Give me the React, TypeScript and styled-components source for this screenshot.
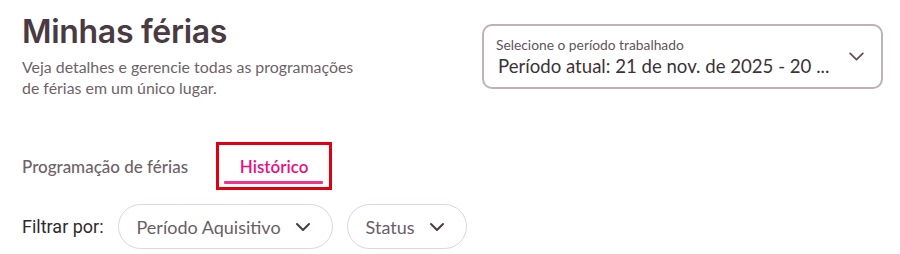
import React from "react";
import styled, { createGlobalStyle } from "styled-components";

const Global = createGlobalStyle`
  html, body { margin: 0; padding: 0; background: #fff; }
  body { font-family: Lato, "Noto Sans", sans-serif; }
`;

const Page = styled.div`
  width: 900px;
  height: 254px;
  box-sizing: border-box;
  padding: 0 17px 0 22px;
  overflow: hidden;
`;

const Header = styled.header`
  display: flex;
  justify-content: space-between;
  align-items: flex-start;
`;

const TitleBlock = styled.div`
  padding-top: 12px;
`;

const Title = styled.h1`
  margin: 0;
  font-family: Inter, "Noto Sans", sans-serif;
  font-weight: 600;
  font-size: 32px;
  line-height: 40px;
  letter-spacing: -0.3px;
  color: #4a3a44;
`;

const Subtitle = styled.p`
  margin: 4px 0 0;
  width: 345px;
  font-family: Lato, sans-serif;
  font-size: 15.9px;
  line-height: 21px;
  color: #6e6269;
`;

const SelectBox = styled.div`
  margin-top: 24px;
  width: 401px;
  height: 65px;
  box-sizing: border-box;
  border: 2px solid #bfb0ba;
  border-radius: 10px;
  display: flex;
  align-items: center;
  padding: 0 16px 0 12px;
`;

const SelectText = styled.div`
  flex: 1;
  min-width: 0;
`;

const SelectLabel = styled.div`
  font-family: Lato, sans-serif;
  font-size: 13.8px;
  line-height: 16px;
  color: #5f545b;
`;

const SelectValue = styled.div`
  margin-top: 2px;
  padding-left: 2px;
  font-family: Lato, sans-serif;
  font-size: 18.6px;
  line-height: 22px;
  color: #3c3238;
  white-space: nowrap;
`;

const Tabs = styled.nav`
  display: flex;
  align-items: stretch;
  margin-top: 44px;
  height: 48px;
`;

const Tab = styled.div<{ $active?: boolean }>`
  position: relative;
  display: flex;
  align-items: center;
  box-sizing: border-box;
  padding: ${(p) => (p.$active ? "0" : "0 28px 0 0")};
  font-family: Lato, sans-serif;
  font-size: 17px;
  font-weight: ${(p) => (p.$active ? 600 : 500)};
  color: ${(p) => (p.$active ? "#e8107f" : "#6e6269")};
  border: ${(p) => (p.$active ? "3px solid #e00010" : "none")};
  width: ${(p) => (p.$active ? "116px" : "auto")};
  justify-content: ${(p) => (p.$active ? "center" : "flex-start")};
`;

const Underline = styled.span`
  position: absolute;
  left: 5px;
  right: 6px;
  bottom: 3px;
  height: 3px;
  background: #f0338f;
  border-radius: 1px;
`;

const FilterRow = styled.div`
  display: flex;
  align-items: center;
  margin-top: 14px;
  gap: 14px;
`;

const FilterLabel = styled.span`
  font-family: Roboto, sans-serif;
  font-size: 18px;
  color: #2f2a2d;
`;

const Pill = styled.button`
  height: 45px;
  box-sizing: border-box;
  border: 1px solid #ddd6db;
  border-radius: 23px;
  background: #fff;
  display: flex;
  align-items: center;
  gap: 14px;
  padding: 0 21px 0 18px;
  font-family: Lato, sans-serif;
  font-size: 18px;
  color: #6a5e66;
  cursor: pointer;
`;

const Chevron = ({ size = 16, color = "#4a3a44", w = 2 }: { size?: number; color?: string; w?: number }) => (
  <svg width={size} height={size} viewBox="0 0 16 16" fill="none">
    <path d="M2 5l6 6 6-6" stroke={color} strokeWidth={w} strokeLinecap="round" strokeLinejoin="round" />
  </svg>
);

export default function App() {
  return (
    <>
      <Global />
      <Page>
        <Header>
          <TitleBlock>
            <Title>Minhas férias</Title>
            <Subtitle>Veja detalhes e gerencie todas as programações de férias em um único lugar.</Subtitle>
          </TitleBlock>
          <SelectBox>
            <SelectText>
              <SelectLabel>Selecione o período trabalhado</SelectLabel>
              <SelectValue>Período atual: 21 de nov. de 2025 - 20 ...</SelectValue>
            </SelectText>
            <Chevron size={17} color="#5a4e56" w={1.6} />
          </SelectBox>
        </Header>
        <Tabs>
          <Tab>Programação de férias</Tab>
          <Tab $active>
            Histórico
            <Underline />
          </Tab>
        </Tabs>
        <FilterRow>
          <FilterLabel>Filtrar por:</FilterLabel>
          <Pill>
            Período Aquisitivo <Chevron />
          </Pill>
          <Pill>
            Status <Chevron />
          </Pill>
        </FilterRow>
      </Page>
    </>
  );
}
